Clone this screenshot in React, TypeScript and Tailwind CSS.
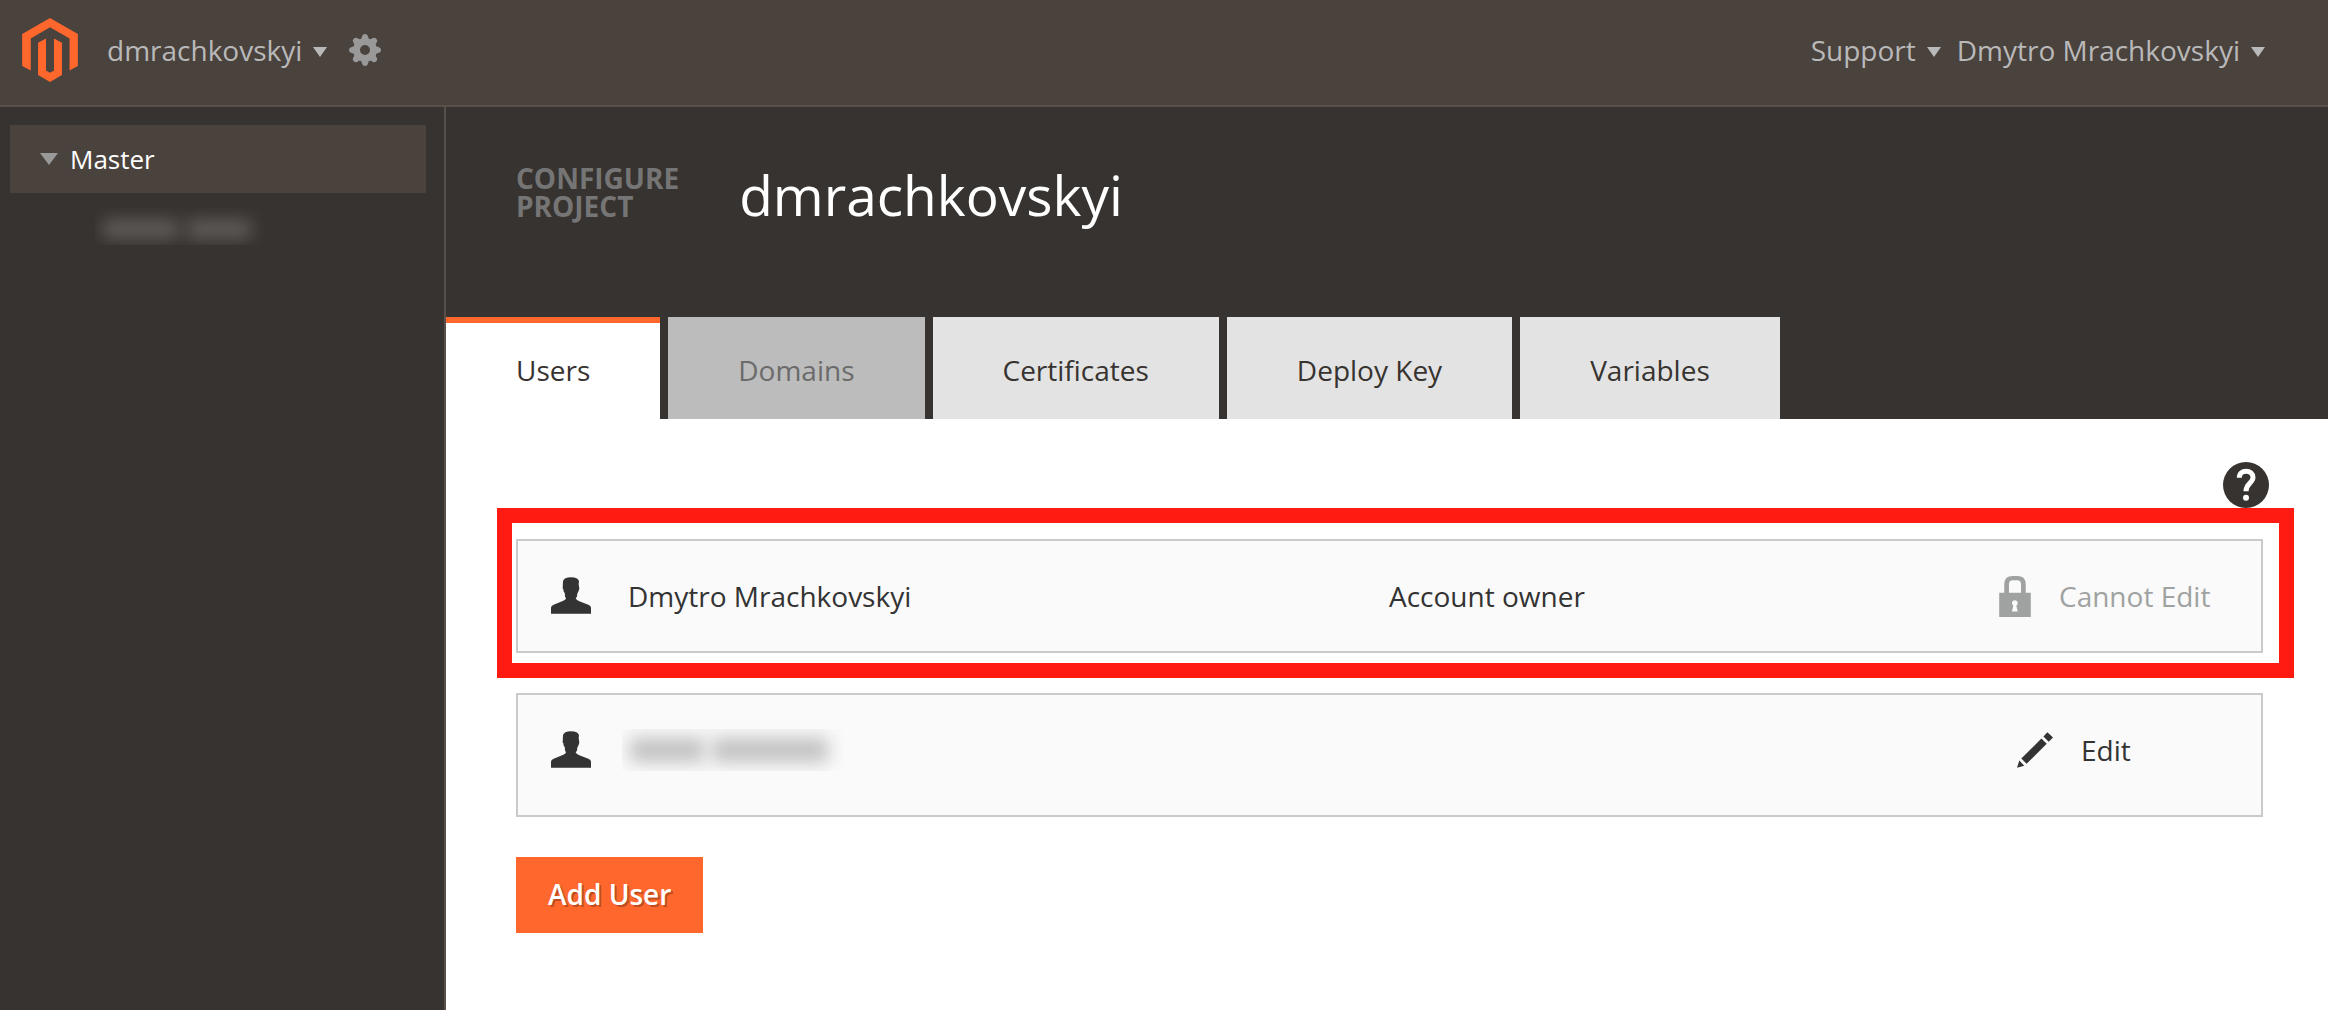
import type { ReactNode } from "react";

const tabs = [
  { label: "Users", state: "active" },
  { label: "Domains", state: "disabled" },
  { label: "Certificates", state: "idle" },
  { label: "Deploy Key", state: "idle" },
  { label: "Variables", state: "idle" },
];

const tabStyles: Record<string, string> = {
  active: "bg-white text-[#373330] border-t-[#ff672d]",
  disabled: "bg-[#bcbcbc] text-[#6b6b6b] border-t-[#bcbcbc]",
  idle: "bg-[#e3e3e3] text-[#373330] border-t-[#e3e3e3]",
};

function Logo() {
  return (
    <svg className="h-16 w-14" viewBox="66 52 168 193" fill="#ff672d" aria-hidden="true">
      <path d="M150 52 234 100V197L209 210V114L150 80 92 114V210L66 197V100Z" />
      <path d="M114 127 138 114V210L150 217 162 210V114L186 127V224L150 245 114 224Z" />
    </svg>
  );
}

function Caret() {
  return (
    <svg className="mt-1 h-[10px] w-[14px]" viewBox="0 0 14 10" fill="currentColor" aria-hidden="true">
      <path d="M0 0H14L7 10Z" />
    </svg>
  );
}

function Gear() {
  return (
    <svg className="size-8" viewBox="-16 -16 32 32" fill="#999999" aria-hidden="true">
      <circle r="8.4" fill="none" stroke="#999999" strokeWidth="6.8" />
      {[0, 45, 90, 135, 180, 225, 270, 315].map((angle) => (
        <path
          key={angle}
          transform={`rotate(${angle})`}
          d="M-4.8 -10 Q-3.2 -11.5 -2.8 -14 Q-2.4 -16 0 -16 Q2.4 -16 2.8 -14 Q3.2 -11.5 4.8 -10Z"
        />
      ))}
    </svg>
  );
}

function Person() {
  return (
    <svg className="h-[37px] w-10" viewBox="213 262 120 110" fill="#333333" aria-hidden="true">
      <path d="M213 372V354Q213 348 221 345L250 333Q258 329 258 325L255 320Q255 314 254 309 250 306 250 298L248 296 249 274Q252 262 273 262 294 262 297 274L296 283 298 296 295 306Q291 309 291 320L287 326Q290 331 298 334L325 345Q333 348 333 354V372Z" />
    </svg>
  );
}

function Lock() {
  return (
    <svg className="h-[41px] w-8" viewBox="298 411 94 122" fill="#a0a2a1" aria-hidden="true">
      <path
        fillRule="evenodd"
        d="M298 461H313V436Q313 411 338 411H352Q377 411 377 436V461H392V533H298ZM327 461H363V436Q363 424 351 424H339Q327 424 327 436ZM336 517 340 499A8.5 8.5 0 1 1 349 499L353 517Z"
      />
    </svg>
  );
}

function Pencil() {
  return (
    <svg className="size-9" viewBox="350 874 109 108" fill="#333333" aria-hidden="true">
      <path d="M442 874 459 890 446 903 430 887ZM424 893 440 909 379 970 363 954ZM357 960 372 976 350 982Z" />
    </svg>
  );
}

function Help() {
  return (
    <svg className="size-[46px]" viewBox="969 65.5 138 138" aria-hidden="true">
      <circle cx="1038" cy="134.5" r="69" fill="#373330" />
      <path
        d="M1018 113C1018 99 1027 93 1038 93 1050 93 1059 101 1059 112 1059 128 1038 130 1038 153"
        fill="none"
        stroke="#ffffff"
        strokeWidth="15"
      />
      <circle cx="1038" cy="173" r="9" fill="#ffffff" />
    </svg>
  );
}

function MenuButton({ children }: { children: ReactNode }) {
  return (
    <button type="button" className="flex items-center gap-[11px]">
      {children}
      <Caret />
    </button>
  );
}

function UserRow({
  name,
  role,
  action,
  className,
  children,
}: {
  name: ReactNode;
  role?: string;
  action: ReactNode;
  className: string;
  children?: ReactNode;
}) {
  return (
    <li
      className={`relative grid grid-cols-[110px_761fr_610fr_262px] items-center border-2 border-[#cacaca] bg-[#fafafa] pt-[34px] text-[#333333] ${className}`}
    >
      <span className="pb-[2px] pl-[33px]">
        <Person />
      </span>
      <span>{name}</span>
      <span>{role}</span>
      {action}
      {children}
    </li>
  );
}

export default function App() {
  return (
    <div className="flex min-h-screen flex-col bg-white font-['Open_Sans','Noto_Sans',sans-serif] text-[28px] leading-[42px]">
      <header className="flex h-[107px] items-center border-b-2 border-[#5a504b] bg-[#4a423d] pr-[63px] pb-[6px] pl-[22px] text-[#b9b9b9]">
        <a href="#home" aria-label="Magento home">
          <Logo />
        </a>
        <div className="ml-[29px] flex items-center gap-[22px]">
          <MenuButton>dmrachkovskyi</MenuButton>
          <button type="button" aria-label="Configure project">
            <Gear />
          </button>
        </div>
        <nav className="ml-auto flex items-center gap-4">
          <MenuButton>Support</MenuButton>
          <MenuButton>Dmytro Mrachkovskyi</MenuButton>
        </nav>
      </header>

      <div className="flex grow">
        <aside className="w-[446px] shrink-0 border-r-2 border-[#5a504b] bg-[#373330] pt-[18px] pr-[18px] pl-[10px]">
          <button
            type="button"
            className="flex h-[68px] w-full items-center gap-3 bg-[#4a423d] pl-[30px] text-[26px] font-medium text-white"
          >
            <svg className="h-3 w-[18px]" viewBox="0 0 18 12" fill="#999999" aria-hidden="true">
              <path d="M0 0H18L9 12Z" />
            </svg>
            Master
          </button>
          <div className="mt-[15px] ml-[85px] flex h-[37px] w-[180px] items-center gap-2 overflow-hidden pt-1 pl-2">
            <span className="h-5 w-[76px] bg-[#5e5a57] blur-[8px]" />
            <span className="h-5 w-[64px] bg-[#5e5a57] blur-[8px]" />
          </div>
        </aside>

        <main className="min-w-0 grow">
          <div className="flex h-[312px] flex-col justify-between bg-[#373330]">
            <div className="flex gap-[60px] pt-[52px] pl-[70px]">
              <p className="pt-[5px] text-[28px] leading-7 font-bold text-[#757575]">
                CONFIGURE
                <br />
                PROJECT
              </p>
              <h1 className="text-[55px] leading-[72px] text-white">dmrachkovskyi</h1>
            </div>
            <div role="tablist" className="flex gap-2">
              {tabs.map((tab) => (
                <button
                  key={tab.label}
                  type="button"
                  role="tab"
                  aria-selected={tab.state === "active"}
                  disabled={tab.state === "disabled"}
                  className={`h-[102px] border-t-[6px] px-[70px] pb-[2px] ${tabStyles[tab.state]}`}
                >
                  {tab.label}
                </button>
              ))}
            </div>
          </div>

          <div className="pt-[43px] pr-[65px] pb-10 pl-[70px]">
            <div className="-mr-[6px] flex justify-end">
              <button type="button" aria-label="Help">
                <Help />
              </button>
            </div>

            <ul className="mt-[31px] flex flex-col gap-10">
              <UserRow
                name="Dmytro Mrachkovskyi"
                role="Account owner"
                className="pb-[34px]"
                action={
                  <span className="flex items-center gap-7 text-[#a0a2a1]">
                    <Lock />
                    Cannot Edit
                  </span>
                }
              >
                <span className="pointer-events-none absolute -top-[33px] -right-[33px] -bottom-[27px] -left-[21px] border-[15px] border-[#ff1a12]" />
              </UserRow>
              <UserRow
                className="pb-[44px]"
                name={
                  <span className="-ml-[6px] flex h-[42px] w-[222px] items-center gap-2 overflow-hidden pl-2">
                    <span className="h-6 w-[74px] bg-[#bfbfbf] blur-[9px]" />
                    <span className="h-6 w-[116px] bg-[#bfbfbf] blur-[9px]" />
                  </span>
                }
                action={
                  <button type="button" className="flex items-center gap-7 pl-[18px]">
                    <Pencil />
                    Edit
                  </button>
                }
              />
            </ul>

            <button
              type="button"
              className="mt-10 h-[76px] bg-[#ff672d] px-8 pb-[2px] font-semibold text-white [text-shadow:2px_2px_0_rgba(0,0,0,0.25)]"
            >
              Add User
            </button>
          </div>
        </main>
      </div>
    </div>
  );
}
